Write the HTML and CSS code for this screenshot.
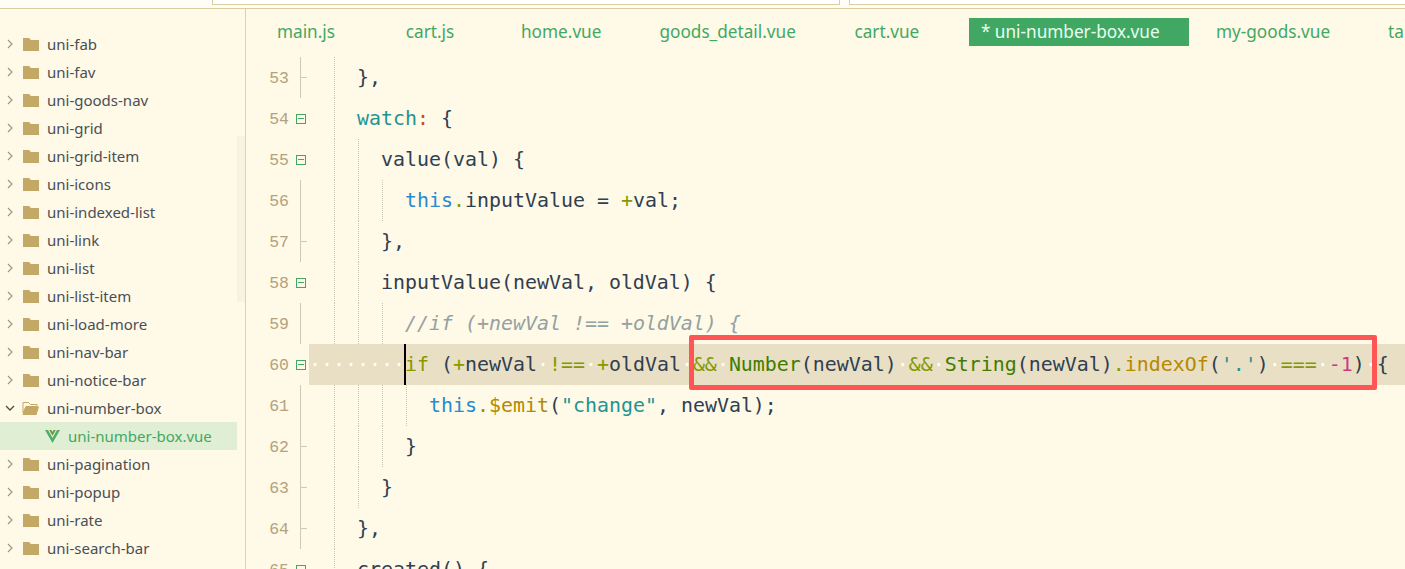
FILE: index.html
```html
<!DOCTYPE html>
<html lang="en">
<head>
<meta charset="utf-8">
<title>uni-number-box.vue</title>
<link rel="stylesheet" href="styles.css">
</head>
<body>
<svg class="defs" width="0" height="0" aria-hidden="true">
  <symbol id="folder" viewBox="0 0 16 14"><path d="M0 1h6l2 2h8v11H0z" fill="#c4a866"/></symbol>
  <symbol id="folder-open" viewBox="0 0 17 14"><path d="M1 1.5h5.5l2 2H15v2H4L1 12z" fill="none" stroke="#c4a866"/><path d="M3.5 5.5H17L14.5 14H0.5z" fill="#c4a866"/></symbol>
  <symbol id="chev" viewBox="0 0 8 10"><path d="M2 1l4 4-4 4" fill="none" stroke="#9a9a94" stroke-width="1.2"/></symbol>
  <symbol id="chev-open" viewBox="0 0 10 8"><path d="M1 2l4 4 4-4" fill="none" stroke="#4a4a44" stroke-width="1.3"/></symbol>
  <symbol id="vue" viewBox="0 0 15 13"><path d="M0 0h3l4.500 8L12 0h3L7.500 13z" fill="#4cae6c"/><path d="M4.200 0h2.200l1.100 2 1.100-2h2.200L7.500 5.800z" fill="#6f9a3a"/></symbol>
</svg>
<div class="app">
  <div class="top">
    <div class="top-box"></div>
    <div class="top-box"></div>
  </div>
  <div class="body">
    <aside class="side">
      <ul class="tree">
        <li class="row"><svg class="chev"><use href="#chev"/></svg><svg class="folder"><use href="#folder"/></svg><span>uni-fab</span></li>
        <li class="row"><svg class="chev"><use href="#chev"/></svg><svg class="folder"><use href="#folder"/></svg><span>uni-fav</span></li>
        <li class="row"><svg class="chev"><use href="#chev"/></svg><svg class="folder"><use href="#folder"/></svg><span>uni-goods-nav</span></li>
        <li class="row"><svg class="chev"><use href="#chev"/></svg><svg class="folder"><use href="#folder"/></svg><span>uni-grid</span></li>
        <li class="row"><svg class="chev"><use href="#chev"/></svg><svg class="folder"><use href="#folder"/></svg><span>uni-grid-item</span></li>
        <li class="row"><svg class="chev"><use href="#chev"/></svg><svg class="folder"><use href="#folder"/></svg><span>uni-icons</span></li>
        <li class="row"><svg class="chev"><use href="#chev"/></svg><svg class="folder"><use href="#folder"/></svg><span>uni-indexed-list</span></li>
        <li class="row"><svg class="chev"><use href="#chev"/></svg><svg class="folder"><use href="#folder"/></svg><span>uni-link</span></li>
        <li class="row"><svg class="chev"><use href="#chev"/></svg><svg class="folder"><use href="#folder"/></svg><span>uni-list</span></li>
        <li class="row"><svg class="chev"><use href="#chev"/></svg><svg class="folder"><use href="#folder"/></svg><span>uni-list-item</span></li>
        <li class="row"><svg class="chev"><use href="#chev"/></svg><svg class="folder"><use href="#folder"/></svg><span>uni-load-more</span></li>
        <li class="row"><svg class="chev"><use href="#chev"/></svg><svg class="folder"><use href="#folder"/></svg><span>uni-nav-bar</span></li>
        <li class="row"><svg class="chev"><use href="#chev"/></svg><svg class="folder"><use href="#folder"/></svg><span>uni-notice-bar</span></li>
        <li class="row"><svg class="chev chev-open"><use href="#chev-open"/></svg><svg class="folder folder-open"><use href="#folder-open"/></svg><span>uni-number-box</span></li>
        <li class="row row-file"><svg class="vue"><use href="#vue"/></svg><span>uni-number-box.vue</span></li>
        <li class="row"><svg class="chev"><use href="#chev"/></svg><svg class="folder"><use href="#folder"/></svg><span>uni-pagination</span></li>
        <li class="row"><svg class="chev"><use href="#chev"/></svg><svg class="folder"><use href="#folder"/></svg><span>uni-popup</span></li>
        <li class="row"><svg class="chev"><use href="#chev"/></svg><svg class="folder"><use href="#folder"/></svg><span>uni-rate</span></li>
        <li class="row"><svg class="chev"><use href="#chev"/></svg><svg class="folder"><use href="#folder"/></svg><span>uni-search-bar</span></li>
        <li class="row"><svg class="chev"><use href="#chev"/></svg><svg class="folder"><use href="#folder"/></svg><span>uni-section</span></li>
      </ul>
      <div class="thumb"></div>
    </aside>
    <main class="main">
      <nav class="tabs">
        <span class="tab">main.js</span>
        <span class="tab">cart.js</span>
        <span class="tab">home.vue</span>
        <span class="tab">goods_detail.vue</span>
        <span class="tab">cart.vue</span>
        <span class="tab tab-active">* uni-number-box.vue</span>
        <span class="tab">my-goods.vue</span>
        <span class="tab">tabBar.vue</span>
      </nav>
      <section class="editor">
        <div class="line"><span class="num">53</span><span class="fold f-tick"></span><div class="code"><i class="pad"></i><i class="guide"></i><span class="t">},</span></div></div>
        <div class="line"><span class="num">54</span><span class="fold"><b class="box"></b></span><div class="code"><i class="pad"></i><i class="guide"></i><span class="t"><span class="str">watch</span><span class="org">:</span> {</span></div></div>
        <div class="line"><span class="num">55</span><span class="fold"><b class="box"></b></span><div class="code"><i class="pad"></i><i class="guide"></i><i class="guide"></i><span class="t">value(val) {</span></div></div>
        <div class="line"><span class="num">56</span><span class="fold f-line"></span><div class="code"><i class="pad"></i><i class="guide"></i><i class="guide"></i><i class="guide"></i><span class="t"><span class="blu">this</span><span class="kw">.</span>inputValue = <span class="kw">+</span>val;</span></div></div>
        <div class="line"><span class="num">57</span><span class="fold f-tick"></span><div class="code"><i class="pad"></i><i class="guide"></i><i class="guide"></i><span class="t">},</span></div></div>
        <div class="line"><span class="num">58</span><span class="fold"><b class="box"></b></span><div class="code"><i class="pad"></i><i class="guide"></i><i class="guide"></i><span class="t">inputValue(newVal, oldVal) {</span></div></div>
        <div class="line"><span class="num">59</span><span class="fold f-line"></span><div class="code"><i class="pad"></i><i class="guide"></i><i class="guide"></i><i class="guide"></i><span class="t cmt">//if (+newVal !== +oldVal) {</span></div></div>
        <div class="line"><span class="num">60</span><span class="fold"><b class="box"></b></span><div class="code code-cur"><span class="t ws">········</span><i class="caret"></i><span class="t"><span class="kw">if</span> (<span class="kw">+</span>newVal<span class="ws">·</span><span class="kw">!==</span><span class="ws">·</span><span class="kw">+</span>oldVal<span class="ws">·</span><span class="kw">&amp;&amp;</span><span class="ws">·</span><span class="grn">Number</span>(newVal)<span class="ws">·</span><span class="kw">&amp;&amp;</span><span class="ws">·</span><span class="grn">String</span>(newVal)<span class="kw">.</span><span class="fn">indexOf</span>(<span class="str">'.'</span>)<span class="ws">·</span><span class="kw">===</span><span class="ws">·</span><span class="mag">-1</span>)<span class="ws">·</span>{</span></div></div>
        <div class="line"><span class="num">61</span><span class="fold f-line"></span><div class="code"><i class="pad"></i><i class="guide"></i><i class="guide"></i><i class="guide"></i><i class="guide"></i><span class="t"><span class="blu">this</span><span class="kw">.</span><span class="fn">$emit</span>(<span class="str">"change"</span>, newVal);</span></div></div>
        <div class="line"><span class="num">62</span><span class="fold f-tick"></span><div class="code"><i class="pad"></i><i class="guide"></i><i class="guide"></i><i class="guide"></i><span class="t">}</span></div></div>
        <div class="line"><span class="num">63</span><span class="fold f-tick"></span><div class="code"><i class="pad"></i><i class="guide"></i><i class="guide"></i><span class="t">}</span></div></div>
        <div class="line"><span class="num">64</span><span class="fold f-tick"></span><div class="code"><i class="pad"></i><i class="guide"></i><span class="t">},</span></div></div>
        <div class="line"><span class="num">65</span><span class="fold"><b class="box"></b></span><div class="code"><i class="pad"></i><i class="guide"></i><span class="t">created() {</span></div></div>
        <div class="annot"></div>
      </section>
    </main>
  </div>
</div>
</body>
</html>
```

FILE: styles.css
```css
* { box-sizing: border-box; }
html, body { margin: 0; height: 100%; overflow: hidden; }
body { background: #fff9e8; font-family: "Noto Sans", sans-serif; }
.defs { position: absolute; }
.app { height: 100vh; display: flex; flex-direction: column; overflow: hidden; }

.top { height: 9px; flex: none; display: flex; gap: 9px; padding-left: 212px; background: #fffdf6; border-bottom: 1px solid #dccda0; overflow: hidden; }
.top-box { height: 5px; background: #fff; border: 1px solid #dccda0; border-top: 0; flex: 0 0 628px; }
.top-box + .top-box { flex: 1; border-right: 0; }

.body { flex: 1; display: flex; min-height: 0; }

.side { width: 246px; flex: none; position: relative; border-right: 1px solid #e0d2a8; padding: 21px 8px 0 0; overflow: hidden; }
.tree { list-style: none; margin: 0; padding: 0; }
.row { height: 28px; display: flex; align-items: center; font-size: 15px; color: #4a4f55; white-space: nowrap; }
.chev { width: 8px; height: 10px; margin-left: 6px; flex: none; }
.chev-open { width: 10px; height: 8px; margin-left: 5px; margin-right: -1px; }
.folder { width: 16px; height: 14px; margin-left: 9px; margin-right: 8px; flex: none; }
.folder-open { width: 17px; margin-left: 8px; }
.row-file { background: #e0eed4; color: #41a863; padding-left: 45px; }
.vue { width: 15px; height: 13px; margin-right: 8px; flex: none; }
.thumb { position: absolute; right: 0; top: 127px; width: 8px; height: 166px; background: #f8f2de; }

.main { flex: 1; min-width: 0; display: flex; flex-direction: column; }
.tabs { height: 48px; flex: none; display: flex; align-items: flex-start; padding-top: 9px; margin-left: -2px; overflow: hidden; }
.tab { flex: none; min-width: 124px; height: 28px; line-height: 28px; padding: 0 29px; text-align: center; font-size: 17.200px; color: #41a863; white-space: nowrap; }
.tab-active { width: 220px; margin-left: 20px; padding: 0 0 0 12px; text-align: left; background: #41a863; color: #e8fff0; }
.tab-active + .tab { padding-left: 27px; }

.editor { flex: 1; position: relative; min-height: 0; overflow: hidden; }
.line { height: 41px; display: flex; }
.num { width: 43px; text-align: right; flex: none; font: 16.500px/43px "Liberation Mono", monospace; color: #b3a27c; }
.fold { width: 20px; flex: none; display: flex; align-items: center; padding-left: 7px; position: relative; }
.f-line::before, .f-tick::before { content: ""; position: absolute; left: 11px; top: 0; bottom: 0; width: 1px; background: #cdc9b6; }
.f-tick::after { content: ""; position: absolute; left: 11px; top: 20px; width: 7px; height: 1px; background: #cdc9b6; }
.box { width: 10px; height: 10px; border: 1px solid #41a863; position: relative; display: block; }
.box::after { content: ""; position: absolute; left: 1px; right: 1px; top: 3px; height: 1px; background: #41a863; }

.code { flex: 1; min-width: 0; display: flex; font: 19.930px/41px "DejaVu Sans Mono", monospace; color: #2f4050; white-space: pre; }
.code-cur { background: #e8dfc5; }
.pad { width: 24px; flex: none; }
.guide { width: 24px; flex: none; margin-left: 1px; margin-right: -1px; border-left: 1px dotted #c9c6b8; }
.t { flex: none; }
.caret { width: 2px; flex: none; margin: 0 -1px; background: #000; }
.ws { color: #fff; }
.kw { color: #859900; }
.str { color: #1f9490; }
.org { color: #cb4b16; }
.blu { color: #268bd2; }
.grn { color: #3f7d00; }
.fn { color: #b58900; }
.mag { color: #d33682; }
.cmt { color: #93a1a1; font-style: italic; }

.annot { position: absolute; left: 443px; top: 278px; width: 688px; height: 55px; border: 5px solid #ff5555; border-radius: 2px; }
```
